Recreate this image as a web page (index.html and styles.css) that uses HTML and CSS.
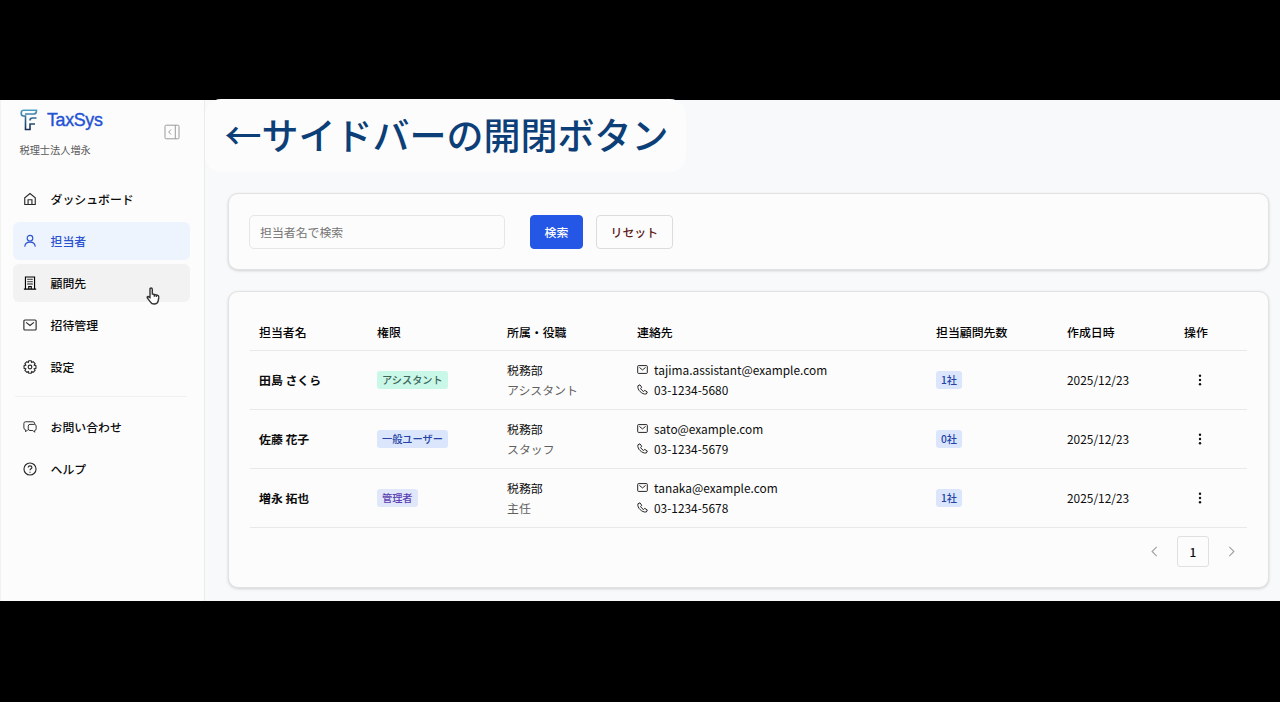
FILE: index.html
```html
<!DOCTYPE html>
<html lang="ja">
<head>
  <meta charset="UTF-8">
  <meta name="viewport" content="width=device-width, initial-scale=1.0">
  <title>TaxSys - 担当者</title>
  <link rel="stylesheet" href="styles.css">
</head>
<body>
  <!-- Shared icons -->
  <svg class="sprite">
    <symbol id="i-mail" viewBox="0 0 16 16">
      <rect x="1" y="2.300" width="14" height="11.400" rx="1.200"/>
      <path d="M3.500 5 8 8.600 12.500 5"/>
    </symbol>
    <symbol id="i-phone" viewBox="0 0 16 16">
      <path d="M4.300 1.200 1.400 2.600c-.8 3 .9 6.400 3.200 8.500s5.400 4.100 9 3.400l1.400-2.900-3.700-2.300-1.900 1.500C7.600 9.900 6.200 8.500 5.300 6.600l1.500-1.900z"/>
    </symbol>
    <symbol id="i-more" viewBox="0 0 16 16">
      <circle cx="8" cy="2.300" r="1.600"/><circle cx="8" cy="8" r="1.600"/><circle cx="8" cy="13.700" r="1.600"/>
    </symbol>
  </svg>

  <div class="app">
    <aside class="sidebar">
      <div class="brand">
        <div>
          <div class="logo">
            <svg class="logo-mark" viewBox="0 0 18 22">
              <defs>
                <linearGradient id="lg" x1="0" y1="0" x2="0" y2="22" gradientUnits="userSpaceOnUse">
                  <stop offset="0" stop-color="#4fa6c8"/>
                  <stop offset=".5" stop-color="#2a6088"/>
                  <stop offset="1" stop-color="#14264e"/>
                </linearGradient>
              </defs>
              <path d="M5 5H14Q16.500 5 16.500 1.300H3.500Q1.200 1.300 1.200 4 1.200 7 3.500 7H5.500V20.500H10V15H15M16.500 9H12.500Q10 9 10 11.500" fill="none" stroke="url(#lg)" stroke-width="1.600"/>
            </svg>
            <span class="logo-text">TaxSys</span>
          </div>
          <p class="company">税理士法人増永</p>
        </div>
        <svg class="toggle" viewBox="0 0 16 16">
          <rect x="1" y="1.200" width="14" height="13.600" rx="1.200"/>
          <path d="M11.300 1.200v13.600M7 5.500 4.700 8 7 10.500"/>
        </svg>
      </div>

      <nav class="nav">
        <a class="nav-item">
          <svg class="icon" viewBox="0 0 16 16"><path d="M2 14.300V6.500L8 1.700l6 4.800v7.800zM5.800 14V8.800h4.400V14"/></svg>
          <span>ダッシュボード</span>
        </a>
        <a class="nav-item active">
          <svg class="icon" viewBox="0 0 16 16"><circle cx="8" cy="4.800" r="3.200"/><path d="M2 14.500C2.300 11 4.800 9.300 8 9.300s5.700 1.700 6 5.200"/></svg>
          <span>担当者</span>
        </a>
        <a class="nav-item hover">
          <svg class="icon dark" viewBox="0 0 16 16"><path d="M2.800 15V1.200h10.400V15M1 15h14M6.600 15v-3h2.800v3"/><path d="M5.800 3v7.500M8 3v7.500M10.200 3v7.500" stroke-dasharray="1.500 1.200"/></svg>
          <span>顧問先</span>
        </a>
        <a class="nav-item">
          <svg class="icon"><use href="#i-mail"/></svg>
          <span>招待管理</span>
        </a>
        <a class="nav-item">
          <svg class="icon" viewBox="0 0 16 16"><path d="M6.600.9h2.800l.5 1.900 1.700-.9 2.200 2.200-1 1.700 2 .6v3.200l-2 .6 1 1.700-2.200 2.200-1.700-.9-.5 1.900H6.600l-.5-1.900-1.700.9-2.200-2.200 1-1.700-2-.6V6.400l2-.6-1-1.700 2.200-2.200 1.700.9z"/><circle cx="8" cy="8" r="2.100"/></svg>
          <span>設定</span>
        </a>
        <hr class="divider">
        <a class="nav-item">
          <svg class="icon thin" viewBox="0 0 16 16"><path d="M5.500 11.500H5l-2 2v-2.300Q1 11 1 9V4q0-2 2-2h8.500q1.800 0 2 2.500"/><path d="M8 5h5q2 0 2 2v3q0 2-1.700 2v2l-2-2H8q-2 0-2-2V7q0-2 2-2z"/></svg>
          <span>お問い合わせ</span>
        </a>
        <a class="nav-item">
          <svg class="icon" viewBox="0 0 16 16"><circle cx="8" cy="8" r="6.900"/><path d="M5.900 6.300C6 3.700 10.200 3.800 10.200 6.200 10.200 7.700 8 7.800 8 9.500M8 11v1.300"/></svg>
          <span>ヘルプ</span>
        </a>
      </nav>
    </aside>

    <main class="main">
      <h1 class="caption">←サイドバーの開閉ボタン</h1>

      <section class="card search">
        <input class="search-input" type="text" placeholder="担当者名で検索">
        <button class="btn primary">検索</button>
        <button class="btn">リセット</button>
      </section>

      <section class="card list">
        <table class="table">
          <colgroup>
            <col class="c-name"><col class="c-role"><col class="c-dept"><col class="c-contact"><col class="c-count"><col class="c-date"><col>
          </colgroup>
          <thead>
            <tr>
              <th>担当者名</th><th>権限</th><th>所属・役職</th><th>連絡先</th><th>担当顧問先数</th><th>作成日時</th><th>操作</th>
            </tr>
          </thead>
          <tbody>
            <tr>
              <td class="name">田島 さくら</td>
              <td><span class="tag green">アシスタント</span></td>
              <td><div>税務部</div><div class="sub">アシスタント</div></td>
              <td>
                <div class="contact"><svg><use href="#i-mail"/></svg>tajima.assistant@example.com</div>
                <div class="contact"><svg><use href="#i-phone"/></svg>03-1234-5680</div>
              </td>
              <td><span class="tag">1社</span></td>
              <td>2025/12/23</td>
              <td><svg class="more"><use href="#i-more"/></svg></td>
            </tr>
            <tr>
              <td class="name">佐藤 花子</td>
              <td><span class="tag">一般ユーザー</span></td>
              <td><div>税務部</div><div class="sub">スタッフ</div></td>
              <td>
                <div class="contact"><svg><use href="#i-mail"/></svg>sato@example.com</div>
                <div class="contact"><svg><use href="#i-phone"/></svg>03-1234-5679</div>
              </td>
              <td><span class="tag">0社</span></td>
              <td>2025/12/23</td>
              <td><svg class="more"><use href="#i-more"/></svg></td>
            </tr>
            <tr>
              <td class="name">増永 拓也</td>
              <td><span class="tag purple">管理者</span></td>
              <td><div>税務部</div><div class="sub">主任</div></td>
              <td>
                <div class="contact"><svg><use href="#i-mail"/></svg>tanaka@example.com</div>
                <div class="contact"><svg><use href="#i-phone"/></svg>03-1234-5678</div>
              </td>
              <td><span class="tag">1社</span></td>
              <td>2025/12/23</td>
              <td><svg class="more"><use href="#i-more"/></svg></td>
            </tr>
          </tbody>
        </table>

        <div class="pager">
          <svg class="arrow" viewBox="0 0 10 10"><path d="M7 .8 2.800 5 7 9.200"/></svg>
          <span class="page">1</span>
          <svg class="arrow" viewBox="0 0 10 10"><path d="M3 .8 7.200 5 3 9.200"/></svg>
        </div>
      </section>
    </main>

    <svg class="cursor" viewBox="0 0 14 18">
      <path d="M4 10.500V2.300Q4 1 5.100 1T6.300 2.300V7l5 1.200q1.700.5 1.500 2.200l-.6 3.400Q11.500 17 8.300 17 5.600 17 4.300 14.800L1.300 11Q.8 9.800 2 9.500z"/>
      <path d="M8.300 7.800v2M10.400 8.300v1.800"/>
    </svg>
  </div>
</body>
</html>
```
FILE: styles.css
```css
* {
  box-sizing: border-box;
}

body {
  margin: 0;
  padding: 100px 0 101px;
  height: 702px;
  background-color: #000;
  color: #0c0c0c;
  font-family: "Noto Sans CJK JP", "Noto Sans", sans-serif;
  font-size: 11.9px;
  overflow: hidden;
}

.sprite {
  display: none;
}

svg {
  fill: none;
  stroke: currentColor;
  flex-shrink: 0;
}

.app {
  position: relative;
  display: flex;
  height: 501px;
  background: #f8f9fa;
}

/* Sidebar */
.sidebar {
  width: 205px;
  flex-shrink: 0;
  background: #fcfcfc;
  border-left: 1px solid #f2f2f2;
  border-right: 1px solid #ebebeb;
}

.brand {
  display: flex;
  justify-content: space-between;
  height: 80.5px;
  padding: 7px 24.5px 0 18.5px;
}

.logo {
  display: flex;
  align-items: center;
  gap: 9.5px;
  height: 25px;
}

.logo-mark {
  width: 18px;
  height: 22px;
}

.logo-text {
  padding-top: 2px;
  color: #2352d4;
  font-family: "Liberation Sans", Arial, sans-serif;
  font-size: 17.8px;
  letter-spacing: -0.3px;
  line-height: 25px;
  -webkit-text-stroke: 0.4px #2352d4;
}

.company {
  margin: 10px 0 0;
  color: #595959;
  font-size: 10.2px;
  line-height: 16px;
}

.toggle {
  width: 16px;
  height: 16px;
  margin-top: 17px;
  color: #9a9a9a;
}

.nav {
  display: flex;
  flex-direction: column;
  gap: 4px;
  padding: 0 14px 0 12px;
}

.nav-item {
  display: flex;
  align-items: center;
  gap: 13.5px;
  height: 37.9px;
  padding-left: 10px;
  border-radius: 6px;
  font-weight: 500;
}

.nav-item span {
  padding-bottom: 1.5px;
}

.nav-item.active {
  background: #edf4fd;
  color: #2a52d0;
}

.nav-item.hover {
  background: #f2f2f2;
}

.icon {
  width: 14px;
  height: 14px;
  color: #2a2a2a;
  stroke-width: 1.3;
}

.active .icon {
  color: inherit;
}

.icon.dark {
  color: #000;
}

.icon.thin {
  stroke-width: 1.1;
}

.divider {
  width: 172px;
  margin: 6px 2px 7px;
  border: 0;
  border-top: 1px solid #f1f1f1;
}

/* Content */
.main {
  flex: 1;
  padding: 0 12px 0 23px;
}

.caption {
  width: 481px;
  height: 73px;
  margin: -1px 0 21px -23px;
  padding-left: 19.5px;
  border-radius: 16px;
  background: #fcfcfc;
  color: #0c3f78;
  font-size: 37px;
  font-weight: 500;
  line-height: 71px;
  white-space: nowrap;
}

.card {
  border: 1px solid #e2e2e2;
  border-radius: 10px;
  background: #fcfcfc;
  box-shadow: 0 1px 3px rgba(0, 0, 0, 0.16);
}

.search {
  display: flex;
  align-items: center;
  height: 77px;
  margin-bottom: 21px;
  padding-left: 20px;
}

.search-input {
  width: 256px;
  height: 34px;
  margin-right: 25px;
  padding: 0 10px;
  border: 1px solid #e6e6e6;
  border-radius: 5px;
  background: #fcfcfc;
  font: inherit;
}

.search-input::placeholder {
  color: #757575;
}

.btn {
  height: 34px;
  padding: 0 13.6px;
  border: 1px solid #dcdcdc;
  border-radius: 4px;
  background: #fcfcfc;
  color: #5c2018;
  font: inherit;
  font-weight: 500;
}

.btn.primary {
  margin-right: 13px;
  border-color: #2457e6;
  background: #2457e6;
  color: #fff;
}

.list {
  height: 297px;
  padding: 21px 21px 0;
}

.table {
  width: 997px;
  table-layout: fixed;
  border-collapse: collapse;
}

.c-name { width: 118px; }
.c-role { width: 130px; }
.c-dept { width: 130px; }
.c-contact { width: 299px; }
.c-count { width: 131px; }
.c-date { width: 117px; }

.table th,
.table td {
  padding: 0 0 0 9px;
  border-bottom: 1px solid #e9e9e9;
  text-align: left;
}

.table th {
  height: 37px;
  color: #000;
  font-weight: 500;
}

.table td {
  height: 59px;
  padding-top: 1px;
  line-height: 20.5px;
}

.table .name {
  font-weight: 700;
}

.sub {
  color: #606060;
}

.contact {
  display: flex;
  align-items: center;
  gap: 6px;
}

.contact svg {
  width: 11px;
  height: 11px;
  margin-top: -1px;
  stroke-width: 1.3;
}

.tag {
  display: inline-block;
  padding: 0 5px;
  border-radius: 3px;
  background: #dbe6fc;
  color: #2443a5;
  font-size: 10.2px;
  font-weight: 500;
  line-height: 17.5px;
  vertical-align: 0.5px;
}

.tag.green {
  background: #c9f8e9;
  color: #40665a;
}

.tag.purple {
  background: #e0e7fa;
  color: #5a40b0;
}

.more {
  display: block;
  width: 12px;
  height: 12px;
  margin: -1px 0 0 9.5px;
  fill: #111;
  stroke: none;
}

.pager {
  display: flex;
  align-items: center;
  justify-content: flex-end;
  gap: 17px;
  margin-top: 8px;
  padding-right: 10px;
}

.arrow {
  width: 11px;
  height: 11px;
  color: #a0a0a0;
}

.page {
  width: 32px;
  height: 31px;
  border: 1px solid #e0e0e0;
  border-radius: 3px;
  font-weight: 500;
  line-height: 29px;
  text-align: center;
}

.cursor {
  position: absolute;
  left: 146px;
  top: 187px;
  width: 14px;
  height: 18px;
  fill: #fff;
  stroke: #333;
  stroke-width: 1.4;
}
```
